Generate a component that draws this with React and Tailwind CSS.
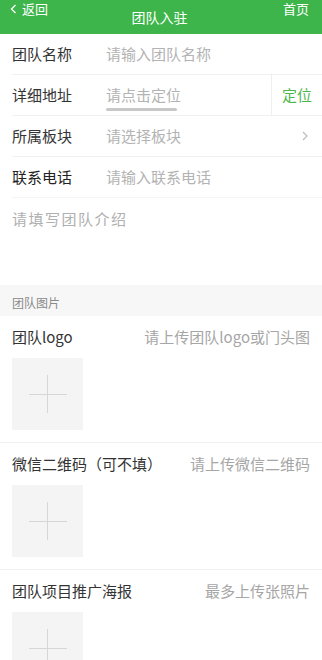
import React from 'react'

const font = { fontFamily: '"Noto Sans CJK SC", "Noto Sans", sans-serif' }

const Row = ({ label, placeholder, right, children }) => (
  <div className="ml-3 flex h-[41px] items-center border-b border-[#f0f0f0]">
    <div className="w-[94px] shrink-0 text-[15px] text-[#333]">{label}</div>
    <div className="relative flex-1 text-[15px] text-[#b3b3b3]">
      {placeholder}
      {children}
    </div>
    {right}
  </div>
)

const Plus = () => (
  <div className="flex h-[72px] w-[71px] items-center justify-center bg-[#f4f4f4]">
    <svg width="38" height="38" viewBox="0 0 38 38" stroke="#d6d6d6" strokeWidth="1">
      <path d="M0 19.5 H38 M18.5 0 V38" />
    </svg>
  </div>
)

const Upload = ({ label, hint, last }) => (
  <div className={`px-3 pt-[10px] ${last ? '' : 'border-b border-[#f0f0f0] pb-[12px]'}`}>
    <div className="flex h-[22px] items-center justify-between">
      <span className="text-[15px] text-[#333]">{label}</span>
      <span className="text-[15px] text-[#a6a6a6]">{hint}</span>
    </div>
    <div className="mt-[10px]">
      <Plus />
    </div>
  </div>
)

export default function App() {
  return (
    <div className="h-[660px] w-[322px] overflow-hidden bg-white" style={font}>
      <div className="flex h-[34px] items-start justify-between bg-[#3db54a] pl-[10px] pr-[13px] text-white">
        <div className="flex w-[60px] items-center gap-[5px] text-[13px] leading-[18px]">
          <svg width="7" height="10" viewBox="0 0 7 10" fill="none" stroke="white" strokeWidth="1.3">
            <path d="M5.5 1 L1.5 5 L5.5 9" />
          </svg>
          返回
        </div>
        <div className="pt-[7px] text-[14px] leading-[20px]">团队入驻</div>
        <div className="flex w-[60px] justify-end text-[13px] leading-[18px]">首页</div>
      </div>

      <Row label="团队名称" placeholder="请输入团队名称" />
      <Row
        label="详细地址"
        placeholder="请点击定位"
        right={
          <div className="flex h-full w-[51px] items-center justify-center border-l border-[#eee] text-[15px] text-[#4cb84c]">
            定位
          </div>
        }
      >
        <div className="absolute left-0 top-[24px] h-[3px] w-[71px] rounded-full bg-[#c8c8c8]" />
      </Row>
      <Row
        label="所属板块"
        placeholder="请选择板块"
        right={
          <svg className="mr-[14px]" width="6" height="10" viewBox="0 0 6 10" fill="none" stroke="#bbb" strokeWidth="1.2">
            <path d="M1 1 L5 5 L1 9" />
          </svg>
        }
      />
      <div className="ml-2">
        <div className="ml-1 flex h-[41px] items-center border-b border-[#f5f5f5]">
          <div className="w-[94px] shrink-0 text-[15px] text-[#222]">联系电话</div>
          <div className="flex-1 text-[15px] text-[#b3b3b3]">请输入联系电话</div>
        </div>
      </div>
      <div className="h-[87px] px-3 pt-[10px] text-[15px] tracking-[1.5px] text-[#b0b0b0]">请填写团队介绍</div>

      <div className="flex h-[31px] items-end bg-[#f7f7f7] px-3 pb-[4px] text-[12px] text-[#8a8a8a]">团队图片</div>

      <Upload label="团队logo" hint="请上传团队logo或门头图" />
      <Upload label="微信二维码（可不填）" hint="请上传微信二维码" />
      <Upload label="团队项目推广海报" hint="最多上传张照片" last />
    </div>
  )
}
